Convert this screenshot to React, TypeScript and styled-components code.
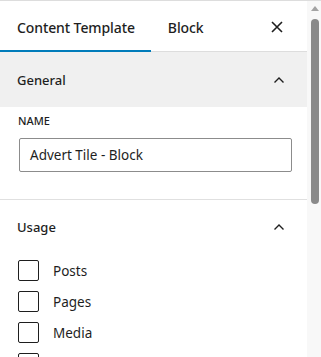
import React from "react";
import styled, { createGlobalStyle } from "styled-components";

const GlobalStyle = createGlobalStyle`
  html, body {
    margin: 0;
    padding: 0;
    background: #ffffff;
  }
  body {
    font-family: "Noto Sans", "Open Sans", sans-serif;
    color: #1e1e1e;
  }
`;

const Frame = styled.div`
  display: flex;
  width: 321px;
  height: 357px;
  overflow: hidden;
  border-top: 1px solid #dddddd;
  box-sizing: border-box;
`;

const Sidebar = styled.div`
  display: flex;
  flex-direction: column;
  width: 307px;
  flex-shrink: 0;

  > * {
    flex-shrink: 0;
  }
`;

const TabBar = styled.div`
  display: flex;
  align-items: stretch;
  height: 51px;
  box-shadow: inset 0 -1px 0 #dddddd;
`;

const Tab = styled.div<{ $active?: boolean }>`
  display: flex;
  align-items: center;
  padding: 2px 16px 0 17px;
  font-size: 14px;
  font-weight: 500;
  letter-spacing: -0.1px;
  box-shadow: ${({ $active }) => ($active ? "inset 0 -2px 0 #007cba" : "none")};
`;

const CloseButton = styled.div`
  margin-left: auto;
  display: flex;
  align-items: center;
  justify-content: center;
  width: 24px;
  margin-right: 18px;
`;

const PanelHeader = styled.div<{ $open?: boolean; $height: number }>`
  display: flex;
  align-items: center;
  justify-content: space-between;
  height: ${({ $height }) => $height}px;
  padding: 0 22px 0 17px;
  background: ${({ $open }) => ($open ? "#f0f0f0" : "transparent")};
  font-size: 13px;
  font-weight: 500;
`;

const PanelBody = styled.div`
  display: flex;
  flex-direction: column;
  padding: 6px 15px 27px 18px;
  border-bottom: 1px solid #e0e0e0;
`;

const FieldLabel = styled.label`
  font-size: 11px;
  font-weight: 500;
  text-transform: uppercase;
  line-height: 16px;
  margin-bottom: 9px;
`;

const TextInput = styled.div`
  display: flex;
  align-items: center;
  height: 34px;
  margin-left: 1px;
  padding: 0 10px;
  border: 1px solid #8c8c8c;
  border-radius: 2px;
  box-sizing: border-box;
  font-size: 13.5px;
`;

const CheckList = styled.div`
  display: flex;
  flex-direction: column;
  gap: 10px;
  padding: 6px 0 0 18px;
`;

const CheckRow = styled.div`
  display: flex;
  align-items: center;
  gap: 14px;
  font-size: 13.5px;
`;

const CheckBox = styled.span`
  width: 21px;
  height: 21px;
  border: 1px solid #1e1e1e;
  border-radius: 2px;
  box-sizing: border-box;
`;

const ScrollTrack = styled.div`
  display: flex;
  flex-direction: column;
  align-items: center;
  flex: 1;
  background: #f8f8f8;
  padding-top: 5px;
`;

const ScrollArrow = styled.div`
  width: 0;
  height: 0;
  border-left: 4px solid transparent;
  border-right: 4px solid transparent;
  border-bottom: 5px solid #a3a3a3;
  margin-left: 2px;
`;

const ScrollThumb = styled.div`
  width: 8px;
  height: 185px;
  margin-top: 8px;
  margin-left: 2px;
  border-radius: 4px;
  background: #8a8a8a;
`;

const Chevron = () => (
  <svg width="12" height="8" viewBox="0 0 12 8" fill="none">
    <path d="M1.5 6.5 6 2l4.5 4.5" stroke="#1e1e1e" strokeWidth="1.4" />
  </svg>
);

const CloseIcon = () => (
  <svg width="12" height="12" viewBox="0 0 12 12" fill="none">
    <path d="M1 1l10 10M11 1 1 11" stroke="#1e1e1e" strokeWidth="1.6" />
  </svg>
);

const postTypes = ["Posts", "Pages", "Media", ""];

const App: React.FC = () => {
  return (
    <>
      <GlobalStyle />
      <Frame>
        <Sidebar>
          <TabBar>
            <Tab $active>Content Template</Tab>
            <Tab>Block</Tab>
            <CloseButton>
              <CloseIcon />
            </CloseButton>
          </TabBar>

          <PanelHeader $open $height={55}>
            General
            <Chevron />
          </PanelHeader>
          <PanelBody>
            <FieldLabel>Name</FieldLabel>
            <TextInput>Advert Tile - Block</TextInput>
          </PanelBody>

          <PanelHeader $height={54}>
            Usage
            <Chevron />
          </PanelHeader>
          <CheckList>
            {postTypes.map((t, i) => (
              <CheckRow key={i}>
                <CheckBox />
                {t}
              </CheckRow>
            ))}
          </CheckList>
        </Sidebar>
        <ScrollTrack>
          <ScrollArrow />
          <ScrollThumb />
        </ScrollTrack>
      </Frame>
    </>
  );
};

export default App;
